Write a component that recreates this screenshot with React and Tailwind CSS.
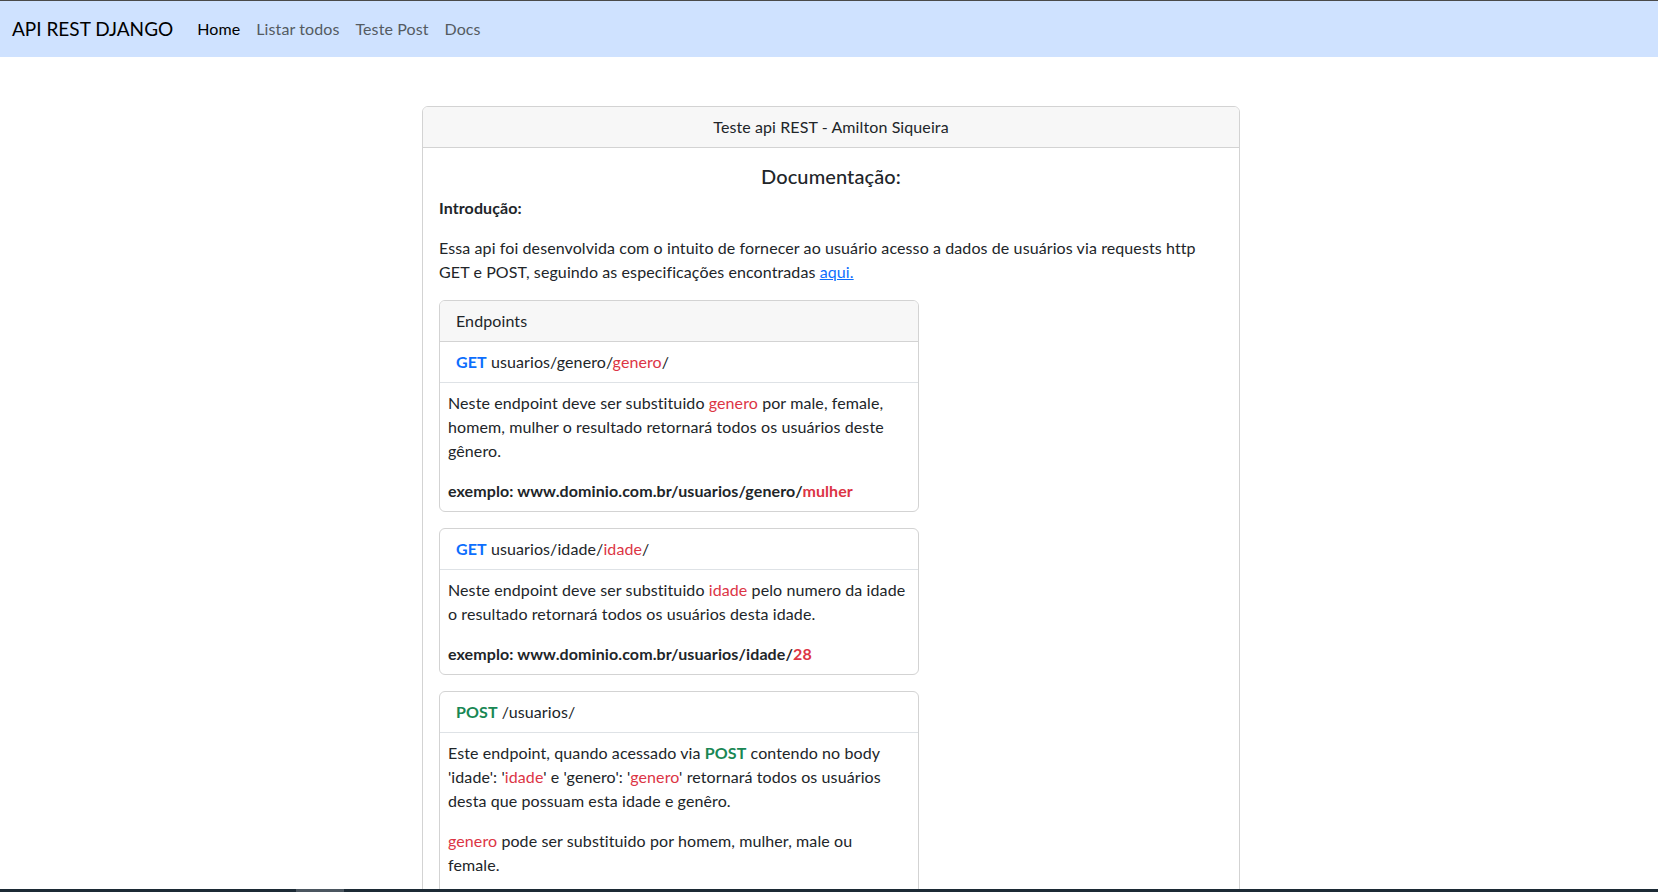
import React from 'react';

const Red = ({ children }) => <span className="text-[#dc3545]">{children}</span>;

const Method = ({ name, color }) => (
  <span className={`font-bold ${color}`}>{name}</span>
);

// one endpoint card: header line + body paragraphs
const EndpointCard = ({ header, title, children }) => (
  <div className="w-[480px] mb-4 border border-[#d3d3d3] rounded-[6px] overflow-hidden bg-white">
    {header && (
      <div className="px-4 py-2 bg-[#f7f7f7] border-b border-[#d3d3d3] leading-6">{header}</div>
    )}
    <div className="px-4 py-2 border-b border-[#dee2e6] leading-6">{title}</div>
    <div className="p-2">{children}</div>
  </div>
);

const App = () => {
  const links = ['Listar todos', 'Teste Post', 'Docs'];

  return (
    <div
      className="min-h-screen bg-white text-[#212529] text-base leading-6 tracking-[0.1px]"
      style={{ fontFamily: 'Lato, "Open Sans", sans-serif' }}
    >
      <nav className="border-t border-[#4a4a4a] bg-[#cfe2ff] h-[57px] flex items-center px-3">
        <a className="text-[19px] leading-[30px] text-black mr-4 tracking-normal">API REST DJANGO</a>
        <ul className="flex items-center">
          <li><a className="px-2 text-black">Home</a></li>
          {links.map((l) => (
            <li key={l}><a className="px-2 text-[#545b62]">{l}</a></li>
          ))}
        </ul>
      </nav>

      <div className="flex justify-center pl-[4px]">
        <div className="w-[818px] mt-[49px] border border-[#d3d3d3] rounded-[6px] overflow-hidden">
          <div className="bg-[#f7f7f7] border-b border-[#d3d3d3] py-2 text-center">
            Teste api REST - Amilton Siqueira
          </div>
          <div className="p-4">
            <h5 className="text-[20px] leading-[24px] font-medium text-center mb-2">Documentação:</h5>
            <p className="font-bold mb-4">Introdução:</p>
            <p className="mb-4">
              Essa api foi desenvolvida com o intuito de fornecer ao usuário acesso a dados de usuários via requests http
              GET e POST, seguindo as especificações encontradas{' '}
              <a className="text-[#0d6efd] underline">aqui.</a>
            </p>

            <EndpointCard
              header="Endpoints"
              title={<><Method name="GET" color="text-[#0d6efd]" /> usuarios/genero/<Red>genero</Red>/</>}
            >
              <p className="mb-4">
                Neste endpoint deve ser substituido <Red>genero</Red> por male, female, homem, mulher o resultado
                retornará todos os usuários deste gênero.
              </p>
              <p className="font-bold">exemplo: www.dominio.com.br/usuarios/genero/<Red>mulher</Red></p>
            </EndpointCard>

            <EndpointCard
              title={<><Method name="GET" color="text-[#0d6efd]" /> usuarios/idade/<Red>idade</Red>/</>}
            >
              <p className="mb-4">
                Neste endpoint deve ser substituido <Red>idade</Red> pelo numero da idade o resultado retornará todos os
                usuários desta idade.
              </p>
              <p className="font-bold">exemplo: www.dominio.com.br/usuarios/idade/<Red>28</Red></p>
            </EndpointCard>

            <EndpointCard
              title={<><Method name="POST" color="text-[#198754]" /> /usuarios/</>}
            >
              <p className="mb-4">
                Este endpoint, quando acessado via <span className="font-bold text-[#198754]">POST</span> contendo no body
                'idade': '<Red>idade</Red>' e 'genero': '<Red>genero</Red>' retornará todos os usuários desta que possuam
                esta idade e genêro.
              </p>
              <p className="mb-4 pr-4">
                <Red>genero</Red> pode ser substituido por homem, mulher, male ou female.
              </p>
              <p className="font-bold">exemplo: www.dominio.com.br/usuarios/</p>
            </EndpointCard>
          </div>
        </div>
      </div>

      {/* bottom strip of the window */}
      <div className="fixed bottom-0 left-0 right-0 h-[3px] bg-[#1c2a35]">
        <div className="ml-[296px] w-[48px] h-full bg-[#4b5660]" />
      </div>
    </div>
  );
};

export default App;
